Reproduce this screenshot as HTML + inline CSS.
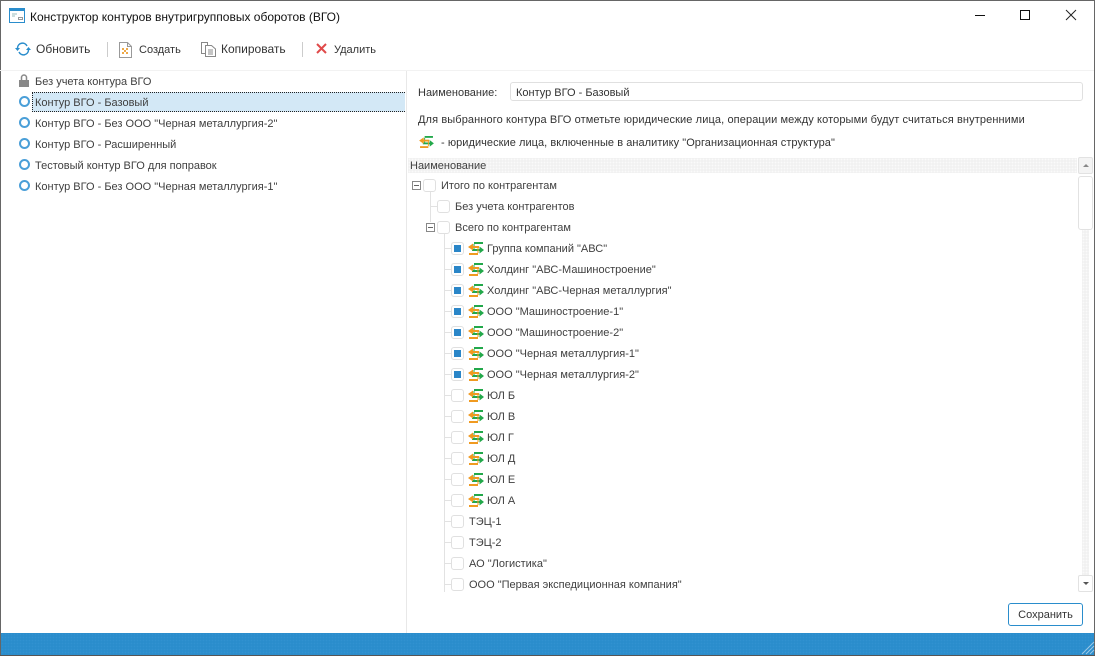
<!DOCTYPE html>
<html lang="ru"><head><meta charset="utf-8"><title>Конструктор контуров ВГО</title>
<style>
*{box-sizing:border-box}
html,body{margin:0;padding:0;background:#fff}
body{width:1095px;height:656px;position:relative;overflow:hidden;font:11px/18px "Liberation Sans",sans-serif;color:#404040}
.a{position:absolute;white-space:nowrap}
.tb{color:#333;top:41px}
.li{left:35px;color:#404040}
.ring{position:absolute;left:19px;width:11px;height:11px;border:2px solid #4a9fd8;border-radius:50%}
.cb{position:absolute;width:13px;height:13px;border:1px solid #e0e0e0;border-radius:3px;background:#fff}
.cb.on::after{content:"";position:absolute;left:2px;top:2px;width:7px;height:7px;background:#2a86c8}
.ex{position:absolute;width:9px;height:9px;border:1px solid #888;background:#fff}
.ex::after{content:"";position:absolute;left:1px;top:3px;width:5px;height:1px;background:#666}
.h{position:absolute;height:1px;background:#e2e2e2}
.v{position:absolute;width:1px;background:#e2e2e2}
.t{position:absolute;white-space:nowrap;color:#404040}
svg{position:absolute;overflow:visible}
.stip{background-color:#f1f1f1;background-image:radial-gradient(#fafafa 35%,transparent 40%);background-size:3px 3px}
</style></head><body>
<svg width="0" height="0" style="position:absolute"><defs>
<symbol id="tr" viewBox="0 0 16 13"><path d="M6 0H15V2H6Z" fill="#22a84a"/><path d="M6 2V7" stroke="#22a84a" stroke-width="1"/><path d="M4 7H13V9H4Z" fill="#22a84a"/><path d="M11.500 4.500 16 8 11.500 11.500Z" fill="#22a84a"/><path d="M10 6V11" stroke="#f09a20" stroke-width="1"/><path d="M3 4H11V6H3Z" fill="#f09a20"/><path d="M5 1.500 0 5 5 8.500Z" fill="#f09a20"/><path d="M1 11H10V13H1Z" fill="#f09a20"/></symbol>
</defs></svg>

<!-- window frame -->
<div class="a" style="left:0;top:0;width:1095px;height:1px;background:#666"></div>
<div class="a" style="left:0;top:0;width:1px;height:656px;background:#666"></div>
<div class="a" style="left:1094px;top:0;width:1px;height:656px;background:#666"></div>

<!-- title -->
<svg style="left:9px;top:8px" width="16" height="15"><rect x=".5" y=".5" width="15" height="14" fill="#fff" stroke="#2a8dcc"/><rect x="0" y="0" width="16" height="3" fill="#2a8dcc"/><path d="M3 6h5M3 8h3" stroke="#9bb" stroke-width="1"/><rect x="9.500" y="9.500" width="4" height="2" fill="none" stroke="#999"/></svg>
<div class="a" style="left:30px;top:9px;color:#111;font-size:12px;line-height:16px">Конструктор контуров внутригрупповых оборотов (ВГО)</div>
<svg style="left:975px;top:15px" width="10" height="1"><rect width="10" height="1" fill="#111"/></svg>
<svg style="left:1020px;top:10px" width="10" height="10"><rect x=".5" y=".5" width="9" height="9" fill="none" stroke="#111"/></svg>
<svg style="left:1066px;top:10px" width="10" height="10"><path d="M0 0 10 10M10 0 0 10" stroke="#222" stroke-width="1"/></svg>

<!-- toolbar -->
<svg style="left:15px;top:42px" width="16" height="14" viewBox="0 0 16 14"><path d="M2.500 6A5 5 0 0 1 12 4" fill="none" stroke="#2a8dcc" stroke-width="1.500"/><path d="M13.500 8A5 5 0 0 1 4 10" fill="none" stroke="#2a8dcc" stroke-width="1.500"/><path d="M0 6H5L2.500 9Z" fill="#2a8dcc"/><path d="M11 8H16L13.500 5Z" fill="#2a8dcc"/></svg>
<div class="a tb" style="left:36px;font-size:12px;line-height:16px">Обновить</div>
<div class="a" style="left:107px;top:42px;width:1px;height:15px;background:#ccc"></div>
<svg style="left:119px;top:42px" width="13" height="16"><path d="M.5.500H8.500L12.500 4.500V15.500H.5Z" fill="#fff" stroke="#999"/><path d="M8.500.5V4.500H12.500" fill="none" stroke="#999"/><path d="M3 6h2v2H3zM7 6h2v2H7zM3 10h2v2H3zM7 10h2v2H7zM5 8h2v2H5z" fill="#eda94a"/></svg>
<div class="a tb" style="left:139px">Создать</div>
<svg style="left:201px;top:42px" width="15" height="15"><path d="M.5.500H6.500V11.500H.5Z" fill="#fff" stroke="#888"/><path d="M4.500 3.500H10.500L14.500 7V14.500H4.500Z" fill="#fff" stroke="#888"/><path d="M7 8h5M7 10h5M7 12h5" stroke="#888"/></svg>
<div class="a tb" style="left:221px;font-size:12px;line-height:16px">Копировать</div>
<div class="a" style="left:302px;top:42px;width:1px;height:15px;background:#ccc"></div>
<svg style="left:316px;top:43px" width="11" height="11"><path d="M1 1 10 10M10 1 1 10" stroke="#e04a4a" stroke-width="2"/></svg>
<div class="a tb" style="left:334px">Удалить</div>

<!-- left list -->
<svg style="left:19px;top:74px" width="10" height="13"><path d="M2.500 6.500V3.500a2.500 2.500 0 0 1 5 0V6.500" fill="none" stroke="#888" stroke-width="1.500"/><rect y="6" width="10" height="7" fill="#888"/></svg>
<div class="a li" style="top:73px">Без учета контура ВГО</div>
<div class="ring" style="top:96px"></div>
<div class="a" style="left:32px;top:92px;width:373px;height:20px;background:#d3e8f6;border:1px dotted #222;border-right:0"></div>
<div class="a li" style="top:94px">Контур ВГО - Базовый</div>
<div class="ring" style="top:117px"></div>
<div class="a li" style="top:115px">Контур ВГО - Без ООО "Черная металлургия-2"</div>
<div class="ring" style="top:138px"></div>
<div class="a li" style="top:136px">Контур ВГО - Расширенный</div>
<div class="ring" style="top:159px"></div>
<div class="a li" style="top:157px">Тестовый контур ВГО для поправок</div>
<div class="ring" style="top:180px"></div>
<div class="a li" style="top:178px">Контур ВГО - Без ООО "Черная металлургия-1"</div>

<!-- splitter -->
<div class="a" style="left:406px;top:70px;width:1px;height:563px;background:#e8e8e8"></div>
<div class="a" style="left:0;top:70px;width:1094px;height:1px;background:#f2f2f2"></div>

<!-- right form -->
<div class="a" style="left:418px;top:84px;color:#333">Наименование:</div>
<div class="a" style="left:510px;top:82px;width:573px;height:19px;border:1px solid #e0e0e0;border-radius:3px"></div>
<div class="a" style="left:516px;top:84px;color:#333">Контур ВГО - Базовый</div>
<div class="a" style="left:418px;top:111px;color:#333;letter-spacing:.11px">Для выбранного контура ВГО отметьте юридические лица, операции между которыми будут считаться внутренними</div>
<svg style="left:419px;top:136px" width="15" height="12"><use href="#tr" width="15" height="12"/></svg>
<div class="a" style="left:441px;top:134px;color:#333;letter-spacing:.05px">- юридические лица, включенные в аналитику "Организационная структура"</div>

<!-- tree header -->
<div class="a stip" style="left:408px;top:158px;width:669px;height:15px"></div>
<div class="a" style="left:410px;top:157px;color:#404040">Наименование</div>

<!-- scrollbar -->
<div class="a stip" style="left:1082px;top:229px;width:7px;height:346px"></div>
<div class="a" style="left:1078px;top:157px;width:15px;height:17px;border:1px solid #e2e2e2;border-radius:2px;background:#f4f4f4"></div>
<svg style="left:1083px;top:164px" width="6" height="3"><path d="M3 0 6 3H0Z" fill="#888"/></svg>
<div class="a" style="left:1078px;top:176px;width:15px;height:54px;border:1px solid #e2e2e2;border-radius:3px;background:#fff"></div>
<div class="a" style="left:1078px;top:575px;width:15px;height:17px;border:1px solid #e2e2e2;border-radius:2px;background:#fff"></div>
<svg style="left:1083px;top:582px" width="6" height="3"><path d="M0 0H6L3 3Z" fill="#555"/></svg>

<!-- tree lines -->
<div class="v" style="left:430px;top:192px;width:1px;height:30px"></div>
<div class="h" style="left:431px;top:206px;width:6px"></div>
<div class="v" style="left:444px;top:234px;height:358px"></div>
<div class="h" style="left:445px;top:248px;width:6px"></div>
<div class="h" style="left:445px;top:269px;width:6px"></div>
<div class="h" style="left:445px;top:290px;width:6px"></div>
<div class="h" style="left:445px;top:311px;width:6px"></div>
<div class="h" style="left:445px;top:332px;width:6px"></div>
<div class="h" style="left:445px;top:353px;width:6px"></div>
<div class="h" style="left:445px;top:374px;width:6px"></div>
<div class="h" style="left:445px;top:395px;width:6px"></div>
<div class="h" style="left:445px;top:416px;width:6px"></div>
<div class="h" style="left:445px;top:437px;width:6px"></div>
<div class="h" style="left:445px;top:458px;width:6px"></div>
<div class="h" style="left:445px;top:479px;width:6px"></div>
<div class="h" style="left:445px;top:500px;width:6px"></div>
<div class="h" style="left:445px;top:521px;width:6px"></div>
<div class="h" style="left:445px;top:542px;width:6px"></div>
<div class="h" style="left:445px;top:563px;width:6px"></div>
<div class="h" style="left:445px;top:584px;width:6px"></div>

<!-- tree rows -->
<div class="ex" style="left:412px;top:181px"></div><div class="cb" style="left:423px;top:179px"></div><div class="t" style="left:441px;top:177px">Итого по контрагентам</div>
<div class="cb" style="left:437px;top:200px"></div><div class="t" style="left:455px;top:198px">Без учета контрагентов</div>
<div class="ex" style="left:426px;top:223px"></div><div class="cb" style="left:437px;top:221px"></div><div class="t" style="left:455px;top:219px">Всего по контрагентам</div>

<div class="cb on" style="left:451px;top:242px"></div><svg style="left:468px;top:242px" width="16" height="13"><use href="#tr" width="16" height="13"/></svg><div class="t" style="left:487px;top:240px">Группа компаний "АВС"</div>
<div class="cb on" style="left:451px;top:263px"></div><svg style="left:468px;top:263px" width="16" height="13"><use href="#tr" width="16" height="13"/></svg><div class="t" style="left:487px;top:261px">Холдинг "АВС-Машиностроение"</div>
<div class="cb on" style="left:451px;top:284px"></div><svg style="left:468px;top:284px" width="16" height="13"><use href="#tr" width="16" height="13"/></svg><div class="t" style="left:487px;top:282px">Холдинг "АВС-Черная металлургия"</div>
<div class="cb on" style="left:451px;top:305px"></div><svg style="left:468px;top:305px" width="16" height="13"><use href="#tr" width="16" height="13"/></svg><div class="t" style="left:487px;top:303px">ООО "Машиностроение-1"</div>
<div class="cb on" style="left:451px;top:326px"></div><svg style="left:468px;top:326px" width="16" height="13"><use href="#tr" width="16" height="13"/></svg><div class="t" style="left:487px;top:324px">ООО "Машиностроение-2"</div>
<div class="cb on" style="left:451px;top:347px"></div><svg style="left:468px;top:347px" width="16" height="13"><use href="#tr" width="16" height="13"/></svg><div class="t" style="left:487px;top:345px">ООО "Черная металлургия-1"</div>
<div class="cb on" style="left:451px;top:368px"></div><svg style="left:468px;top:368px" width="16" height="13"><use href="#tr" width="16" height="13"/></svg><div class="t" style="left:487px;top:366px">ООО "Черная металлургия-2"</div>
<div class="cb" style="left:451px;top:389px"></div><svg style="left:468px;top:389px" width="16" height="13"><use href="#tr" width="16" height="13"/></svg><div class="t" style="left:487px;top:387px">ЮЛ Б</div>
<div class="cb" style="left:451px;top:410px"></div><svg style="left:468px;top:410px" width="16" height="13"><use href="#tr" width="16" height="13"/></svg><div class="t" style="left:487px;top:408px">ЮЛ В</div>
<div class="cb" style="left:451px;top:431px"></div><svg style="left:468px;top:431px" width="16" height="13"><use href="#tr" width="16" height="13"/></svg><div class="t" style="left:487px;top:429px">ЮЛ Г</div>
<div class="cb" style="left:451px;top:452px"></div><svg style="left:468px;top:452px" width="16" height="13"><use href="#tr" width="16" height="13"/></svg><div class="t" style="left:487px;top:450px">ЮЛ Д</div>
<div class="cb" style="left:451px;top:473px"></div><svg style="left:468px;top:473px" width="16" height="13"><use href="#tr" width="16" height="13"/></svg><div class="t" style="left:487px;top:471px">ЮЛ Е</div>
<div class="cb" style="left:451px;top:494px"></div><svg style="left:468px;top:494px" width="16" height="13"><use href="#tr" width="16" height="13"/></svg><div class="t" style="left:487px;top:492px">ЮЛ А</div>
<div class="cb" style="left:451px;top:515px"></div><div class="t" style="left:469px;top:513px">ТЭЦ-1</div>
<div class="cb" style="left:451px;top:536px"></div><div class="t" style="left:469px;top:534px">ТЭЦ-2</div>
<div class="cb" style="left:451px;top:557px"></div><div class="t" style="left:469px;top:555px">АО "Логистика"</div>
<div class="cb" style="left:451px;top:578px"></div><div class="t" style="left:469px;top:576px">ООО "Первая экспедиционная компания"</div>

<!-- save -->
<div class="a" style="left:1008px;top:603px;width:75px;height:23px;border:1px solid #2a8dcc;border-radius:3px;text-align:center;line-height:22px;color:#333;background:#fff">Сохранить</div>

<!-- status bar -->
<div class="a" style="left:1px;top:633px;width:1093px;height:22px;background-color:#2a8dcc;background-image:radial-gradient(#3192d0 35%,transparent 40%);background-size:3px 3px"></div>
<div class="a" style="left:0;top:655px;width:1095px;height:1px;background:#555"></div>
<svg style="left:1082px;top:642px" width="12" height="12"><path d="M12 0 0 12M12 4 4 12M12 8 8 12" stroke="#9cc9e6" stroke-width="1"/></svg>
</body></html>
